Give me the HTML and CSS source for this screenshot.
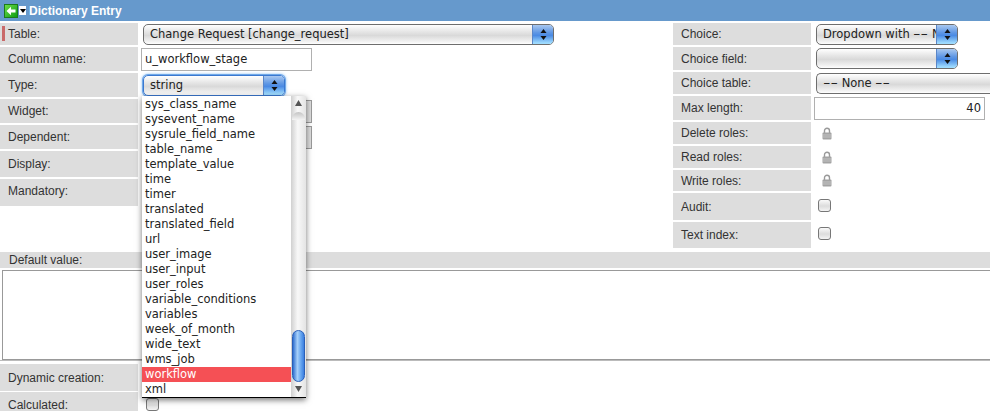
FILE: index.html
```html
<!DOCTYPE html>
<html lang="en">
<head>
    <meta charset="UTF-8">
    <title>Dictionary Entry</title>
    <link rel="stylesheet" href="styles.css">
</head>
<body>

<header class="title-bar">
    <svg class="back-icon" width="14" height="14" viewBox="0 0 14 14">
        <defs>
            <linearGradient id="green" x1="0" y1="0" x2="1" y2="1">
                <stop offset="0" stop-color="#6fe04a"/>
                <stop offset="1" stop-color="#0c9a12"/>
            </linearGradient>
        </defs>
        <rect x="0.5" y="0.5" width="13" height="13" fill="url(#green)" stroke="#1c7a1c"/>
        <path d="M2.5 7 L7 2.8 V5.6 H11.5 V8.4 H7 V11.2 Z" fill="#fff"/>
    </svg>
    <span class="menu-btn"><svg width="6" height="4" viewBox="0 0 6 4"><path d="M0 0H6L3 4Z" fill="#000"/></svg></span>
    <span class="title-text">Dictionary Entry</span>
</header>

<div class="form-top">
    <div class="col col-left">
        <div class="row">
            <div class="label label-required">Table:</div>
            <div class="select select-table"><span class="select-text">Change Request [change_request]</span><span class="stepper"><svg width="7" height="13" viewBox="0 0 7 13"><path d="M3.5 1L6.5 5H0.5ZM3.5 12L0.5 8H6.5Z" fill="#111"/></svg></span></div>
        </div>
        <div class="row">
            <div class="label">Column name:</div>
            <div class="input input-column">u_workflow_stage</div>
        </div>
        <div class="row">
            <div class="label">Type:</div>
            <div class="select select-type"><span class="select-text">string</span><span class="stepper"><svg width="7" height="13" viewBox="0 0 7 13"><path d="M3.5 1L6.5 5H0.5ZM3.5 12L0.5 8H6.5Z" fill="#111"/></svg></span></div>
        </div>
        <div class="row">
            <div class="label">Widget:</div>
            <div class="select-under"></div>
        </div>
        <div class="row">
            <div class="label">Dependent:</div>
            <div class="select-under"></div>
        </div>
        <div class="row">
            <div class="label">Display:</div>
        </div>
        <div class="row">
            <div class="label label-high">Mandatory:</div>
        </div>
    </div>

    <div class="col col-right">
        <div class="row">
            <div class="label">Choice:</div>
            <div class="select select-choice"><span class="select-text">Dropdown with <span class="dashes">--</span> N</span><span class="stepper"><svg width="7" height="13" viewBox="0 0 7 13"><path d="M3.5 1L6.5 5H0.5ZM3.5 12L0.5 8H6.5Z" fill="#111"/></svg></span></div>
        </div>
        <div class="row">
            <div class="label">Choice field:</div>
            <div class="select select-choice"><span class="select-text"></span><span class="stepper"><svg width="7" height="13" viewBox="0 0 7 13"><path d="M3.5 1L6.5 5H0.5ZM3.5 12L0.5 8H6.5Z" fill="#111"/></svg></span></div>
        </div>
        <div class="row">
            <div class="label">Choice table:</div>
            <div class="select select-wide"><span class="select-text"><span class="dashes">--</span> None <span class="dashes">--</span></span></div>
        </div>
        <div class="row">
            <div class="label">Max length:</div>
            <div class="input input-length">40</div>
        </div>
        <div class="row">
            <div class="label">Delete roles:</div>
            <svg class="lock" width="10" height="13" viewBox="0 0 10 13"><path d="M2.5 6V3.8a2.5 2.5 0 0 1 5 0V6" fill="none" stroke="#999" stroke-width="1.4"/><rect x="0.5" y="5.5" width="9" height="7" rx="1" fill="#a3a3a3"/><path d="M1 8h8M1 10h8" stroke="#c4c4c4"/></svg>
        </div>
        <div class="row">
            <div class="label">Read roles:</div>
            <svg class="lock" width="10" height="13" viewBox="0 0 10 13"><path d="M2.5 6V3.8a2.5 2.5 0 0 1 5 0V6" fill="none" stroke="#999" stroke-width="1.4"/><rect x="0.5" y="5.5" width="9" height="7" rx="1" fill="#a3a3a3"/><path d="M1 8h8M1 10h8" stroke="#c4c4c4"/></svg>
        </div>
        <div class="row">
            <div class="label">Write roles:</div>
            <svg class="lock" width="10" height="13" viewBox="0 0 10 13"><path d="M2.5 6V3.8a2.5 2.5 0 0 1 5 0V6" fill="none" stroke="#999" stroke-width="1.4"/><rect x="0.5" y="5.5" width="9" height="7" rx="1" fill="#a3a3a3"/><path d="M1 8h8M1 10h8" stroke="#c4c4c4"/></svg>
        </div>
        <div class="row">
            <div class="label">Audit:</div>
            <span class="checkbox checkbox-right"></span>
        </div>
        <div class="row">
            <div class="label">Text index:</div>
            <span class="checkbox checkbox-right"></span>
        </div>
    </div>
</div>

<div class="default-label">Default value:</div>
<div class="default-box"><div class="default-area"></div></div>

<div class="form-bottom">
    <div class="row">
        <div class="label">Dynamic creation:</div>
    </div>
    <div class="row">
        <div class="label label-calc">Calculated:</div>
        <span class="checkbox checkbox-left"></span>
    </div>
</div>

<!-- open dropdown of the Type field -->
<div class="popup">
    <ul class="popup-list">
        <li>sys_class_name</li>
        <li>sysevent_name</li>
        <li>sysrule_field_name</li>
        <li>table_name</li>
        <li>template_value</li>
        <li>time</li>
        <li>timer</li>
        <li>translated</li>
        <li>translated_field</li>
        <li>url</li>
        <li>user_image</li>
        <li>user_input</li>
        <li>user_roles</li>
        <li>variable_conditions</li>
        <li>variables</li>
        <li>week_of_month</li>
        <li>wide_text</li>
        <li>wms_job</li>
        <li class="selected">workflow</li>
        <li>xml</li>
    </ul>
    <div class="scrollbar">
        <svg class="arrow" width="7" height="6" viewBox="0 0 7 6"><path d="M3.5 0L7 6H0Z" fill="#555"/></svg>
        <div class="track">
            <div class="track-cap"></div>
            <div class="thumb"></div>
        </div>
        <svg class="arrow" width="7" height="6" viewBox="0 0 7 6"><path d="M0 0H7L3.5 6Z" fill="#555"/></svg>
    </div>
</div>

</body>
</html>
```

FILE: styles.css
```css
html, body {
    margin: 0;
    padding: 0;
    height: 411px;
    overflow: hidden;
}

body {
    position: relative;
    background-color: #fff;
    font-family: "Liberation Sans", Arial, sans-serif;
    font-size: 12px;
    color: #333;
}

.title-bar {
    height: 21px;
    background-color: #6699cc;
    display: flex;
    align-items: center;
    padding-left: 4px;
    color: #fff;
    font-weight: bold;
}

.back-icon {
    margin-right: 1px;
}

.menu-btn {
    width: 7px;
    height: 9px;
    background-color: #fff;
    display: flex;
    align-items: center;
    justify-content: center;
    margin-right: 3px;
}

.form-top {
    display: flex;
    margin-top: 2px;
}

.col {
    display: grid;
    row-gap: 2px;
}

.col-left {
    width: 673px;
    grid-template-rows: 22px 24px 24px 24px 24px 26px 27px;
}

.col-right {
    width: 317px;
    grid-template-rows: 22px 23px 22px 24px 22px 22px 21px 27px 26px;
}

.row {
    display: flex;
    align-items: center;
    min-width: 0;
}

.label {
    width: 130px;
    height: 100%;
    flex-shrink: 0;
    background-color: #dddddd;
    padding-left: 8px;
    display: flex;
    align-items: center;
}

.label-required {
    position: relative;
}

.label-required::before {
    content: "";
    position: absolute;
    left: 2px;
    top: 3px;
    width: 3px;
    height: 15px;
    background-color: #c96a6a;
}

.label-high {
    align-items: flex-start;
    padding-top: 5px;
    height: calc(100% - 5px);
}

.label-calc {
    align-items: flex-start;
    padding-top: 6px;
    height: calc(100% - 6px);
}

.select {
    height: 21px;
    box-sizing: border-box;
    margin-left: 5px;
    display: flex;
    flex-shrink: 0;
    overflow: hidden;
    border: 1px solid #6e6e6e;
    border-radius: 5px;
    background: linear-gradient(#ffffff, #e6e6e6 35%, #d9d9d9 55%, #f4f4f4 90%, #ffffff);
    font-family: "DejaVu Sans", Verdana, sans-serif;
    font-size: 11.5px;
    color: #222;
}

.select-text {
    flex: 1;
    min-width: 0;
    overflow: hidden;
    white-space: nowrap;
    padding-left: 6px;
    line-height: 19px;
}

/* the dashes are much wider in the original font */
.dashes {
    display: inline-block;
    width: 15px;
    transform: scaleX(1.8);
    transform-origin: left;
}

.stepper {
    width: 20px;
    flex-shrink: 0;
    display: flex;
    align-items: center;
    justify-content: center;
    border-left: 1px solid #5a86c8;
    background: linear-gradient(#a9c8f0, #5f97e4 40%, #4a8ae4 55%, #9fdcff 95%);
}

.select-table {
    width: 411px;
}

.select-type {
    width: 142px;
    margin-top: 1px;
    border-color: #3a78d0;
    box-shadow: 0 0 0 1px #6fa8e8, 0 0 3px 1px #8fc0f4;
}

.select-under {
    width: 169px;
    height: 23px;
    margin-left: 5px;
    box-sizing: border-box;
    border: 1px solid #999;
    background-color: #dddddd;
}

.select-choice {
    width: 142px;
}

.select-wide {
    width: 174px;
    border-right: 0;
    border-radius: 5px 0 0 5px;
}

.input {
    height: 23px;
    box-sizing: border-box;
    margin-left: 3px;
    border: 1px solid #b0b0b0;
    background-color: #fff;
    font-family: "DejaVu Sans", Verdana, sans-serif;
    font-size: 11.5px;
    line-height: 21px;
    color: #222;
    padding: 0 3px;
}

.input-column {
    width: 171px;
}

.input-length {
    width: 171px;
    text-align: right;
}

.lock {
    margin-left: 11px;
}

.checkbox {
    width: 13px;
    height: 13px;
    box-sizing: border-box;
    border: 1px solid #777;
    border-radius: 3px;
    background: linear-gradient(#fafafa, #dcdcdc 55%, #f4f4f4);
    flex-shrink: 0;
}

.checkbox-right {
    margin: 0 0 3px 7px;
}

.checkbox-left {
    margin: 0 0 5px 8px;
}

.default-label {
    position: absolute;
    top: 252px;
    left: 0;
    right: 0;
    height: 16px;
    padding-left: 9px;
    line-height: 16px;
    background-color: #dddddd;
}

.default-box {
    position: absolute;
    top: 268px;
    left: 0;
    right: 0;
    height: 93px;
    box-sizing: border-box;
    padding: 2px 0 0 2px;
    border-bottom: 1px solid #bbb;
}

.default-area {
    height: 88px;
    border: 1px solid #999;
    border-right: 0;
}

.form-bottom {
    position: absolute;
    top: 364px;
    left: 0;
    right: 0;
    display: grid;
    grid-template-rows: 27px 30px;
    row-gap: 1px;
}

.popup {
    position: absolute;
    left: 142px;
    top: 96px;
    width: 164px;
    height: 301px;
    display: flex;
    background-color: #fff;
    border-bottom: 1px solid #000;
    box-shadow: 0 2px 6px rgba(0, 0, 0, 0.55);
    font-family: "DejaVu Sans", Verdana, sans-serif;
    font-size: 11.5px;
    color: #222;
}

.popup-list {
    list-style: none;
    margin: 0;
    padding: 1px 0 0;
    width: 149px;
}

.popup-list li {
    height: 15px;
    line-height: 15px;
    padding-left: 3px;
    white-space: nowrap;
}

.popup-list .selected {
    background-color: #f55055;
    color: #fff;
}

.scrollbar {
    width: 15px;
    display: flex;
    flex-direction: column;
    align-items: center;
    background: linear-gradient(90deg, #d0d0d0, #f8f8f8 45%, #e4e4e4);
}

.arrow {
    flex-shrink: 0;
    margin: 4px 0 5px;
}

.track {
    flex: 1;
    width: 100%;
    position: relative;
    display: flex;
    flex-direction: column;
    justify-content: flex-end;
}

.track-cap {
    position: absolute;
    top: 1px;
    left: 1px;
    right: 1px;
    height: 8px;
    border-radius: 7px 7px 0 0;
    background: linear-gradient(#c4c4c4, #f4f4f4);
}

.thumb {
    width: 13px;
    height: 52px;
    margin-left: 1px;
    box-sizing: border-box;
    border: 1px solid #2a5fb8;
    border-radius: 7px;
    background: linear-gradient(90deg, #2f6fd0, #a6d0fa 40%, #6aa8f0 70%, #3a7ee0);
}
```
